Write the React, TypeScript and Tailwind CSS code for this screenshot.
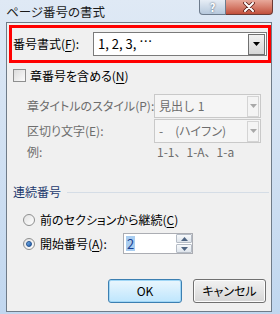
import React from "react";

const Arrow = ({ disabled, up }: { disabled?: boolean; up?: boolean }) => (
  <svg width="7" height="4" viewBox="0 0 7 4" className={up ? "rotate-180" : ""}>
    <path d="M0 0h7L3.5 4z" fill={disabled ? "#a8a8a8" : "#000"} />
  </svg>
);

const DropButton = ({ disabled }: { disabled?: boolean }) => (
  <div
    className={
      disabled
        ? "w-[12px] h-[21px] my-[1px] mr-[1px] border border-[#d4d4d4] bg-[#f4f4f4] flex items-center justify-center"
        : "w-[17px] h-[21px] my-[1px] mr-[1px] border border-[#707070] bg-gradient-to-b from-[#f2f2f2] to-[#d6d6d6] flex items-center justify-center"
    }
  >
    <Arrow disabled={disabled} />
  </div>
);

const Radio = ({ checked }: { checked?: boolean }) => (
  <div className="w-[12px] h-[12px] rounded-full border border-[#8e8f8f] bg-gradient-to-br from-[#e2e2e2] to-[#ffffff] flex items-center justify-center">
    {checked && (
      <div className="w-[6px] h-[6px] rounded-full bg-gradient-to-br from-[#7bb4ea] to-[#1d5aa8] border border-[#1f4f8f]" />
    )}
  </div>
);

const U = ({ children }: { children: React.ReactNode }) => <span className="underline underline-offset-2">{children}</span>;

export default function App() {
  return (
    <div className="w-[280px] h-[314px] bg-gradient-to-b from-[#dfe9f5] to-[#c1d7ef] flex flex-col pl-[6px] pr-[8px] pb-[2px] font-['Noto_Sans_CJK_JP',sans-serif] text-[12px] text-black overflow-hidden">
      {/* title bar */}
      <div className="h-[22px] flex items-start justify-between shrink-0">
        <div className="mt-[3px] leading-[18px] text-[12.5px] text-[#1a1a1a] [font-feature-settings:'palt']">ページ番号の書式</div>
        <div className="flex mr-[-1px]">
          <div className="w-[27px] h-[15px] border border-t-0 border-[#6d7b8c] rounded-bl-[4px] bg-gradient-to-b from-[#e6edf5] to-[#b6c8dc] flex items-center justify-center text-white text-[11px] font-bold leading-none [text-shadow:0_0_2px_#34495f]">
            ?
          </div>
          <div className="w-[47px] h-[15px] border border-t-0 border-l-0 border-[#6d3a34] rounded-br-[4px] bg-gradient-to-b from-[#e8a99b] to-[#c14f3c] flex items-center justify-center">
            <svg width="12" height="10" viewBox="0 0 12 10">
              <path d="M2 1l8 8M10 1L2 9" stroke="#5a1d16" strokeWidth="3.6" strokeLinecap="round" />
              <path d="M2 1l8 8M10 1L2 9" stroke="#ffffff" strokeWidth="2" strokeLinecap="round" />
            </svg>
          </div>
        </div>
      </div>

      {/* client area */}
      <div className="flex-1 bg-[#f0f0f0] border border-[#6f7b88] flex flex-col">
        <div className="mt-[2px] ml-[2px] h-[38px] border-[3px] border-[#ff0000] flex items-center">
          <div className="w-[81px] pl-[1px] whitespace-nowrap [font-feature-settings:'palt']">
            番号書式(<U>F</U>):
          </div>
          <div className="w-[174px] h-[24px] border border-[#7a7a7a] bg-white flex items-center justify-between">
            <span className="pl-[4px] text-[13px] whitespace-pre">
              1, 2, 3, <span className="inline-block -translate-y-[3px]">…</span>
            </span>
            <DropButton />
          </div>
        </div>

        <div className="mt-[6px] ml-[6px] h-[13px] flex items-center gap-[4px]">
          <div className="w-[13px] h-[13px] border border-[#8e8f8f] bg-gradient-to-br from-[#dcdcdc] to-[#fbfbfb]" />
          <span className="whitespace-nowrap leading-[16px] [font-feature-settings:'palt']">
            章番号を含める(<U>N</U>)
          </span>
        </div>

        <div className="mt-[12px] ml-[20px] flex items-center text-[#6d6d6d]">
          <div className="w-[127px] whitespace-nowrap [font-feature-settings:'palt']">章タイトルのスタイル(P):</div>
          <div className="w-[107px] h-[24px] border border-[#c9c9c9] bg-[#f5f5f5] flex items-center justify-between">
            <span className="pl-[4px]">見出し 1</span>
            <DropButton disabled />
          </div>
        </div>
        <div className="mt-[1px] ml-[20px] flex items-center text-[#6d6d6d]">
          <div className="w-[127px] whitespace-nowrap [font-feature-settings:'palt']">区切り文字(E):</div>
          <div className="w-[107px] h-[24px] border border-[#c9c9c9] bg-[#f5f5f5] flex items-center justify-between">
            <span className="pl-[4px] whitespace-pre [font-feature-settings:'palt']">-　(ハイフン)</span>
            <DropButton disabled />
          </div>
        </div>
        <div className="mt-[1px] ml-[20px] flex items-center h-[16px] text-[#6d6d6d]">
          <div className="w-[130px]">例:</div>
          <div className="whitespace-nowrap">1-1、1-A、1-a</div>
        </div>

        <div className="mt-[24px] ml-[6px] mr-[2px] h-[16px] flex items-center gap-[6px]">
          <span className="whitespace-nowrap text-[#1e3a6e]">連続番号</span>
          <div className="flex-1 h-px bg-[#d5dde6]" />
        </div>

        <div className="mt-[12px] ml-[16px] h-[16px] flex items-center gap-[5px]">
          <Radio />
          <span className="whitespace-nowrap [font-feature-settings:'palt']">
            前のセクションから継続(<U>C</U>)
          </span>
        </div>

        <div className="mt-[5px] ml-[16px] h-[21px] flex items-center">
          <Radio checked />
          <span className="ml-[5px] w-[83px] whitespace-nowrap [font-feature-settings:'palt']">
            開始番号(<U>A</U>):
          </span>
          <div className="w-[70px] h-[21px] border border-[#abadb3] bg-white flex items-center justify-between">
            <span className="ml-[2px] px-[1px] bg-[#a9cdf0] text-[#1b3f91] text-[13px] leading-[15px]">2</span>
            <div className="flex flex-col w-[16px] h-[19px] gap-[1px]">
              <div className="flex-1 border border-[#b5bcc6] rounded-[1px] bg-gradient-to-b from-[#f7f9fb] to-[#dfe5ec] flex items-center justify-center">
                <svg width="7" height="4" viewBox="0 0 7 4"><path d="M3.5 0L7 4H0z" fill="#4e6482" /></svg>
              </div>
              <div className="flex-1 border border-[#b5bcc6] rounded-[1px] bg-gradient-to-b from-[#f7f9fb] to-[#dfe5ec] flex items-center justify-center">
                <svg width="7" height="4" viewBox="0 0 7 4"><path d="M0 0h7L3.5 4z" fill="#4e6482" /></svg>
              </div>
            </div>
          </div>
        </div>

        <div className="mt-[25px] mr-[5px] flex justify-end gap-[11px]">
          <button className="w-[74px] h-[24px] rounded-[3px] border border-[#3c7fb1] bg-gradient-to-b from-[#eaf6fd] to-[#bee6fd] shadow-[inset_0_0_0_1px_#9fd6f6] text-[12px]">
            OK
          </button>
          <button className="w-[73px] h-[24px] rounded-[3px] border border-[#707070] bg-gradient-to-b from-[#f2f2f2] to-[#d6d6d6] shadow-[inset_0_0_0_1px_#fcfcfc] text-[12px] [font-feature-settings:'palt']">
            キャンセル
          </button>
        </div>
      </div>
    </div>
  );
}
